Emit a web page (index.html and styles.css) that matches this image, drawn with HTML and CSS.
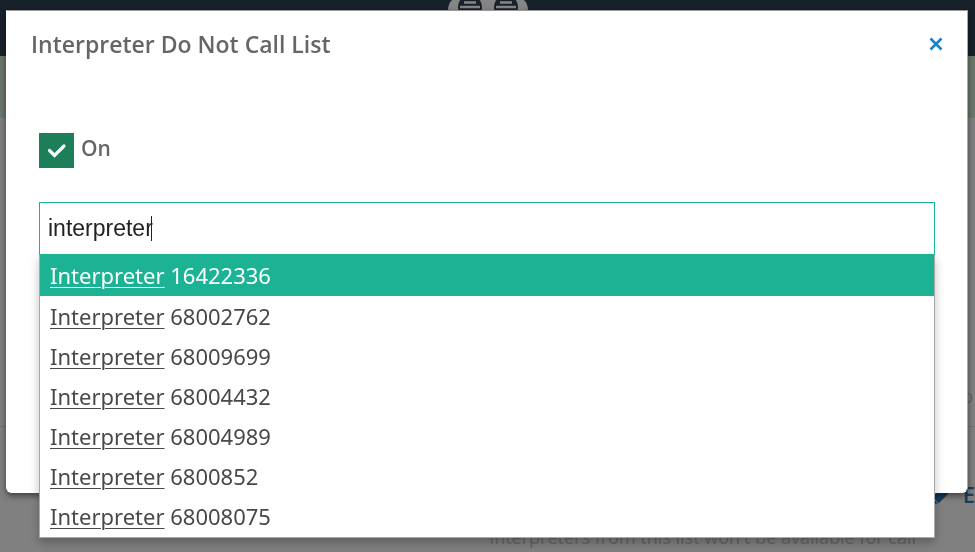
FILE: index.html
```html
<!DOCTYPE html>
<html lang="en">
<head>
<meta charset="utf-8">
<title>Interpreter Do Not Call List</title>
<link rel="stylesheet" href="styles.css">
</head>
<body>
<div class="page">
  <header class="topbar">
    <svg class="logo" viewBox="0 0 80 40" aria-hidden="true">
      <path d="M0 12C0 6 1 3 4 0h72c3 3 4 6 4 12z" fill="#858585"/>
      <circle cx="22" cy="7" r="12" fill="#18212b"/>
      <circle cx="58" cy="7" r="12" fill="#18212b"/>
      <path d="M16 2.500h12M12 7h20M52 2.500h12M48 7h20" stroke="#858585" stroke-width="2.500"/>
    </svg>
  </header>
  <div class="notice"></div>
  <main class="settings">
    <div class="option">o</div>
    <div class="edit-row">
      <a class="edit" href="#">
        <svg class="pencil" viewBox="0 0 24 24" aria-hidden="true"><path d="M1 23l2-8L16 2l6 6L9 21z" fill="#163f60"/><path d="M4 17l4 4" stroke="#808080"/></svg>
        <span>E</span>
      </a>
    </div>
    <p class="hint">Interpreters from this list won't be available for call</p>
  </main>
</div>

<div class="overlay">
  <section class="modal" role="dialog" aria-labelledby="dialog-title">
    <div class="modal-head">
      <h1 id="dialog-title">Interpreter Do Not Call List</h1>
      <button class="close" type="button" aria-label="Close">
        <svg viewBox="0 0 14 14" aria-hidden="true"><path d="M1.500 1.500l11 11M12.500 1.500l-11 11" stroke="#1782cc" stroke-width="2.600"/></svg>
      </button>
    </div>
    <label class="toggle">
      <input type="checkbox" checked>
      <svg class="tick" viewBox="0 0 35 35" aria-hidden="true"><path d="M10.500 17.500l5 5 9.500-9.500" fill="none" stroke="#fff" stroke-width="3.200" stroke-linecap="round"/></svg>
      <span>On</span>
    </label>
    <div class="combo">
      <input class="search" type="text" value="interpreter" aria-label="Interpreter" autofocus>
      <span class="caret"></span>
      <ul class="results" role="listbox">
        <li class="active" role="option" aria-selected="true"><u>Interpreter</u> 16422336</li>
        <li role="option"><u>Interpreter</u> 68002762</li>
        <li role="option"><u>Interpreter</u> 68009699</li>
        <li role="option"><u>Interpreter</u> 68004432</li>
        <li role="option"><u>Interpreter</u> 68004989</li>
        <li role="option"><u>Interpreter</u> 6800852</li>
        <li role="option"><u>Interpreter</u> 68008075</li>
      </ul>
    </div>
  </section>
</div>
</body>
</html>
```
FILE: styles.css
```css
* {
  box-sizing: border-box;
}

body {
  margin: 0;
  overflow: hidden;
  background: #808080;
  color: #484848;
  font-family: "Open Sans", "Noto Sans", sans-serif;
}

.page {
  height: 100vh;
  overflow: hidden;
}

.topbar {
  display: flex;
  justify-content: center;
  height: 56px;
  background: #18212b;
}

.logo {
  width: 80px;
  height: 40px;
}

.notice {
  height: 62px;
  background: #6c786b;
}

.settings {
  color: #656565;
  font-size: 18px;
}

.option {
  display: flex;
  justify-content: flex-end;
  align-items: flex-end;
  height: 309px;
  padding: 0 2px 18px;
  border-bottom: 1px solid #737373;
}

.edit-row {
  display: flex;
  justify-content: flex-end;
  height: 98px;
  padding-top: 52px;
}

.edit {
  display: flex;
  align-items: center;
  gap: 9px;
  height: 30px;
  color: #163f60;
  font-size: 22px;
  font-weight: 600;
  text-decoration: none;
}

.pencil {
  width: 24px;
  height: 24px;
}

.hint {
  margin: 0 59px 0 0;
  line-height: 24px;
  text-align: right;
  white-space: nowrap;
}

.overlay {
  position: fixed;
  inset: 0;
  padding: 10px 7px 0 6px;
}

.modal {
  min-height: 483px;
  padding: 18px 32px;
  border: 1px solid #aaa;
  border-color: #999 #aaa #fff #fff;
  border-radius: 0 0 6px 6px;
  background: #fff;
  box-shadow: 0 3px 6px rgba(0, 0, 0, 0.5);
}

.modal-head {
  display: flex;
  justify-content: space-between;
  align-items: center;
  height: 30px;
  margin: 0 -8px;
}

h1 {
  margin: 0;
  color: #666;
  font-size: 23px;
  font-weight: 600;
  line-height: 30px;
}

.close {
  display: flex;
  padding: 0;
  border: 0;
  background: none;
}

.close svg {
  width: 14px;
  height: 14px;
}

.toggle {
  display: flex;
  gap: 7px;
  width: fit-content;
  margin-top: 74px;
  color: #666;
  font-size: 21px;
  font-weight: 600;
  line-height: 30px;
}

.toggle input {
  width: 35px;
  height: 35px;
  margin: 0 -42px 0 0;
  appearance: none;
  background: #1c7f59;
}

.tick {
  z-index: 1;
  width: 35px;
  height: 35px;
}

.combo {
  position: relative;
  margin-top: 34px;
}

.search {
  display: block;
  width: 100%;
  height: 53px;
  padding: 0 8px;
  border: 1px solid #1bb394;
  outline: 0;
  background: #fff;
  color: #222;
  caret-color: transparent;
  font: 23px "Liberation Sans", Arial, sans-serif;
}

.caret {
  position: absolute;
  top: 14px;
  left: 112px;
  width: 1px;
  height: 25px;
  background: #222;
}

.results {
  position: absolute;
  top: 52px;
  left: 0;
  right: 0;
  margin: 0;
  padding: 0 0 1px;
  border: 1px solid #aaa;
  border-top-color: #1bb394;
  background: #fff;
  box-shadow: 0 5px 9px rgba(0, 0, 0, 0.25);
  list-style: none;
}

.results li {
  height: 40px;
  padding: 0 10px;
  font-family: "Noto Sans", "Open Sans", sans-serif;
  font-size: 22px;
  line-height: 40px;
}

.results u {
  text-decoration-thickness: 1px;
  text-underline-offset: 3px;
}

.results .active {
  height: 41px;
  background: #1bb394;
  color: #fff;
}
```
